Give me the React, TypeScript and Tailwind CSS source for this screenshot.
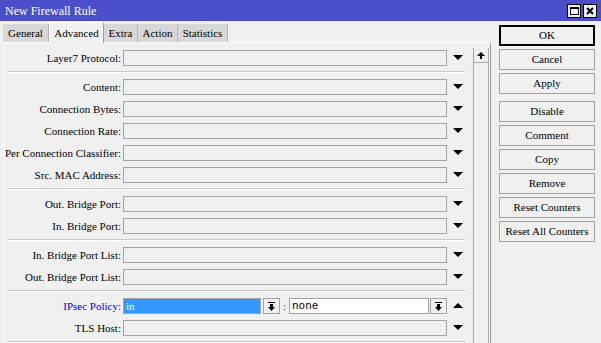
import React from "react";

const font = "font-['Liberation_Serif',serif] text-[11px] leading-none";

function DownArrow() {
  return (
    <svg width="10" height="5" viewBox="0 0 10 5" className="block">
      <polygon points="0,0 10,0 5,5" fill="#000" />
    </svg>
  );
}

function UpArrow() {
  return (
    <svg width="10" height="5" viewBox="0 0 10 5" className="block">
      <polygon points="0,5 10,5 5,0" fill="#000" />
    </svg>
  );
}

function BarDown() {
  return (
    <svg width="7" height="9" viewBox="0 0 7 9" className="block">
      <rect x="0" y="0" width="7" height="1" fill="#000" />
      <rect x="2" y="2" width="3" height="3" fill="#000" />
      <polygon points="0,5 7,5 3.5,9" fill="#000" />
    </svg>
  );
}

type Row = { label: string; blue?: boolean };

const groups: Row[][] = [
  [{ label: "Layer7 Protocol:" }],
  [
    { label: "Content:" },
    { label: "Connection Bytes:" },
    { label: "Connection Rate:" },
    { label: "Per Connection Classifier:" },
    { label: "Src. MAC Address:" },
  ],
  [{ label: "Out. Bridge Port:" }, { label: "In. Bridge Port:" }],
  [{ label: "In. Bridge Port List:" }, { label: "Out. Bridge Port List:" }],
];

function Label({ text, blue }: { text: string; blue?: boolean }) {
  return (
    <div className={`w-[117px] text-right whitespace-nowrap ${blue ? "text-[#0000ee]" : "text-black"}`}>
      {text}
    </div>
  );
}

function FieldRow({ label }: Row) {
  return (
    <div className="flex items-center h-[16px]">
      <Label text={label} />
      <div className="ml-[2px] w-[324px] h-[16px] border border-[#a3a3a3] bg-[#f0f0f0]" />
      <div className="ml-[6px] w-[10px] flex justify-center -mt-[2px]">
        <DownArrow />
      </div>
    </div>
  );
}

function Separator() {
  return <div className="ml-[4px] w-[457px] h-[2px] border-t border-[#c8c8c8] border-b border-b-white" />;
}

const buttons1 = ["Cancel", "Apply"];
const buttons2 = ["Disable", "Comment", "Copy", "Remove", "Reset Counters", "Reset All Counters"];

function Btn({ text, def }: { text: string; def?: boolean }) {
  return (
    <div
      className={`w-[96px] h-[21px] flex items-center justify-center bg-[#f0f0f0] ${
        def ? "border-2 border-black" : "border border-[#a0a0a0]"
      }`}
    >
      {text}
    </div>
  );
}

export default function App() {
  const tabs = ["General", "Advanced", "Extra", "Action", "Statistics"];
  return (
    <div className={`w-[601px] h-[343px] bg-[#f0f0f0] flex flex-col overflow-hidden ${font}`}>
      {/* title bar */}
      <div className="h-[21px] bg-[#4a4fc9] flex items-center justify-between pl-[5px] pr-[4px] shrink-0">
        <span className="text-white text-[12px]">New Firewall Rule</span>
        <div className="flex gap-[2px]">
          <div className="w-[14px] h-[14px] bg-[#f0f0f0] border border-black flex items-center justify-center">
            <div className="w-[9px] h-[8px] border border-black border-t-2" />
          </div>
          <div className="w-[14px] h-[14px] bg-[#f0f0f0] border border-black flex items-center justify-center">
            <svg width="8" height="8" viewBox="0 0 8 8">
              <path d="M1 1 L7 7 M7 1 L1 7" stroke="#000" strokeWidth="2" />
            </svg>
          </div>
        </div>
      </div>

      <div className="flex flex-1 min-h-0">
        {/* left: tabs + panel */}
        <div className="w-[491px] pl-[3px] flex flex-col">
          <div className="flex items-end h-[21px] shrink-0">
            {tabs.map((t) =>
              t === "Advanced" ? (
                <div
                  key={t}
                  className="h-[21px] w-[55px] flex items-center justify-center bg-[#f0f0f0] border-l border-t border-white border-r border-r-[#a0a0a0] -mb-[1px] relative"
                >
                  {t}
                </div>
              ) : (
                <div
                  key={t}
                  className={`h-[18px] flex items-center justify-center bg-[#d8d8d8] border-r border-[#b4b4b4] ${
                    t === "General" ? "w-[46px]" : t === "Extra" ? "w-[34px]" : t === "Action" ? "w-[40px]" : "w-[50px]"
                  }`}
                >
                  {t}
                </div>
              )
            )}
          </div>
          <div className="flex-1 border-l border-t border-white border-r border-r-[#a0a0a0] flex">
            <div className="w-[465px] pt-[7px] flex flex-col">
              {groups.map((g, gi) => (
                <React.Fragment key={gi}>
                  <div className="flex flex-col gap-[6px]">
                    {g.map((r) => (
                      <FieldRow key={r.label} {...r} />
                    ))}
                  </div>
                  <div className="h-[5px]" />
                  <Separator />
                  <div className="h-[6px]" />
                </React.Fragment>
              ))}
              <div className="flex flex-col gap-[6px]">
                <div className="flex items-center h-[16px]">
                  <Label text="IPsec Policy:" blue />
                  <div className="ml-[2px] w-[138px] h-[16px] border border-[#a3a3a3] bg-[#3399ff] text-white flex items-center pl-[2px]">
                    in
                  </div>
                  <div className="ml-[2px] w-[17px] h-[16px] border border-[#a3a3a3] bg-[#f0f0f0] flex items-center justify-center">
                    <BarDown />
                  </div>
                  <div className="w-[9px] text-center text-[#333]">:</div>
                  <div className="w-[140px] h-[16px] border border-[#a3a3a3] bg-white font-['Liberation_Mono',monospace] flex items-center pl-[2px]">
                    none
                  </div>
                  <div className="ml-[1px] w-[17px] h-[16px] border border-[#a3a3a3] bg-[#f0f0f0] flex items-center justify-center">
                    <BarDown />
                  </div>
                  <div className="ml-[6px] w-[10px] flex justify-center -mt-[2px]">
                    <UpArrow />
                  </div>
                </div>
                <FieldRow label="TLS Host:" />
              </div>
              <div className="h-[5px]" />
              <Separator />
            </div>
            <div className="ml-[4px] mt-[5px] w-[16px] border-l border-r border-[#a8a8a8] flex flex-col">
              <div className="h-[15px] border-b border-[#a8a8a8] flex items-center justify-center">
                <svg width="8" height="7" viewBox="0 0 8 7">
                  <polygon points="0,4 8,4 4,0" fill="#000" />
                  <rect x="3" y="4" width="2" height="3" fill="#000" />
                </svg>
              </div>
            </div>
          </div>
        </div>

        {/* right: buttons */}
        <div className="ml-[8px] pt-[4px] flex flex-col">
          <Btn text="OK" def />
          <div className="mt-[3px] flex flex-col gap-[3px]">
            {buttons1.map((b) => (
              <Btn key={b} text={b} />
            ))}
          </div>
          <div className="mt-[7px] flex flex-col gap-[3px]">
            {buttons2.map((b) => (
              <Btn key={b} text={b} />
            ))}
          </div>
        </div>
      </div>
    </div>
  );
}
